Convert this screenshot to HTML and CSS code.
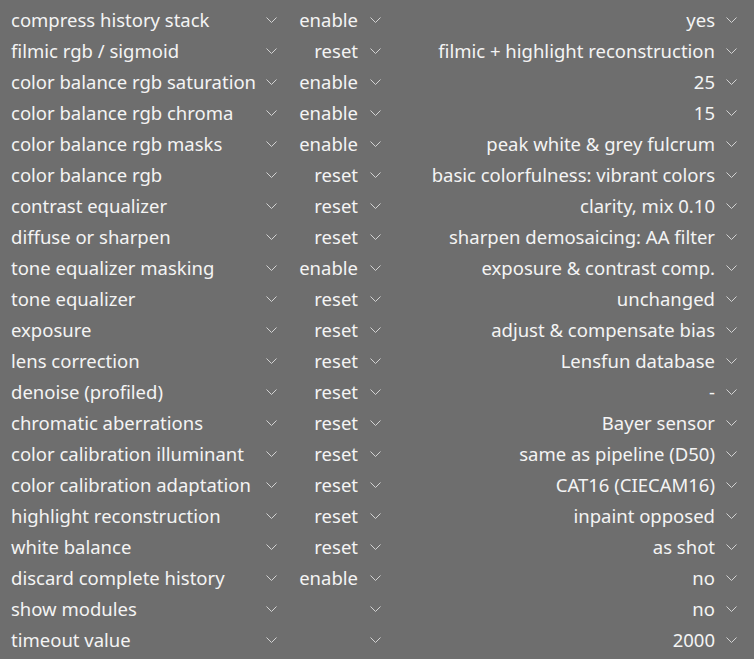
FILE: index.html
```html
<!DOCTYPE html>
<html lang="en">
<head>
    <meta charset="UTF-8">
    <meta name="viewport" content="width=device-width, initial-scale=1.0">
    <title>preferences</title>
    <link rel="stylesheet" href="styles.css">
</head>
<body>
    <div class="prefs" id="prefs"></div>
    <script>
        const rows = [
            ["compress history stack", "enable", "yes"],
            ["filmic rgb / sigmoid", "reset", "filmic + highlight reconstruction"],
            ["color balance rgb saturation", "enable", "25"],
            ["color balance rgb chroma", "enable", "15"],
            ["color balance rgb masks", "enable", "peak white & grey fulcrum"],
            ["color balance rgb", "reset", "basic colorfulness: vibrant colors"],
            ["contrast equalizer", "reset", "clarity, mix 0.10"],
            ["diffuse or sharpen", "reset", "sharpen demosaicing: AA filter"],
            ["tone equalizer masking", "enable", "exposure & contrast comp."],
            ["tone equalizer", "reset", "unchanged"],
            ["exposure", "reset", "adjust & compensate bias"],
            ["lens correction", "reset", "Lensfun database"],
            ["denoise (profiled)", "reset", "-"],
            ["chromatic aberrations", "reset", "Bayer sensor"],
            ["color calibration illuminant", "reset", "same as pipeline (D50)"],
            ["color calibration adaptation", "reset", "CAT16 (CIECAM16)"],
            ["highlight reconstruction", "reset", "inpaint opposed"],
            ["white balance", "reset", "as shot"],
            ["discard complete history", "enable", "no"],
            ["show modules", "", "no"],
            ["timeout value", "", "2000"]
        ];
        const chevron = '<svg class="chev" width="11" height="6" viewBox="0 0 11 6"><polyline points="0.5,0.5 5.5,5.5 10.5,0.5" fill="none" stroke="currentColor" stroke-width="1"/></svg>';
        const prefs = document.getElementById("prefs");
        rows.forEach(([name, action, value]) => {
            prefs.innerHTML += `<div class="row">
                <div class="combo name"><span class="text">${name}</span>${chevron}</div>
                <div class="combo action"><span class="text">${action}</span>${chevron}</div>
                <div class="combo value"><span class="text">${value}</span>${chevron}</div>
            </div>`;
        });
    </script>
</body>
</html>
```

FILE: styles.css
```css
body {
    margin: 0;
    background-color: #6e6e6e;
    font-family: "Noto Sans", sans-serif;
    font-size: 18.5px;
    color: #f4f4f4;
}
.prefs {
    padding: 4px 17px 4px 11px;
}
.row {
    display: flex;
    height: 31px;
    line-height: 31px;
}
.combo {
    display: flex;
    align-items: center;
    white-space: nowrap;
}
.combo .text {
    flex: 1;
}
.name {
    width: 266px;
}
.action {
    width: 104px;
}
.value {
    width: 356px;
}
.action .text,
.value .text {
    text-align: right;
}
.chev {
    color: #d2d2d2;
    margin-left: 12px;
    flex: none;
}
.name .chev {
    margin-left: 0;
}
.value .chev {
    margin-left: 11px;
}
```
